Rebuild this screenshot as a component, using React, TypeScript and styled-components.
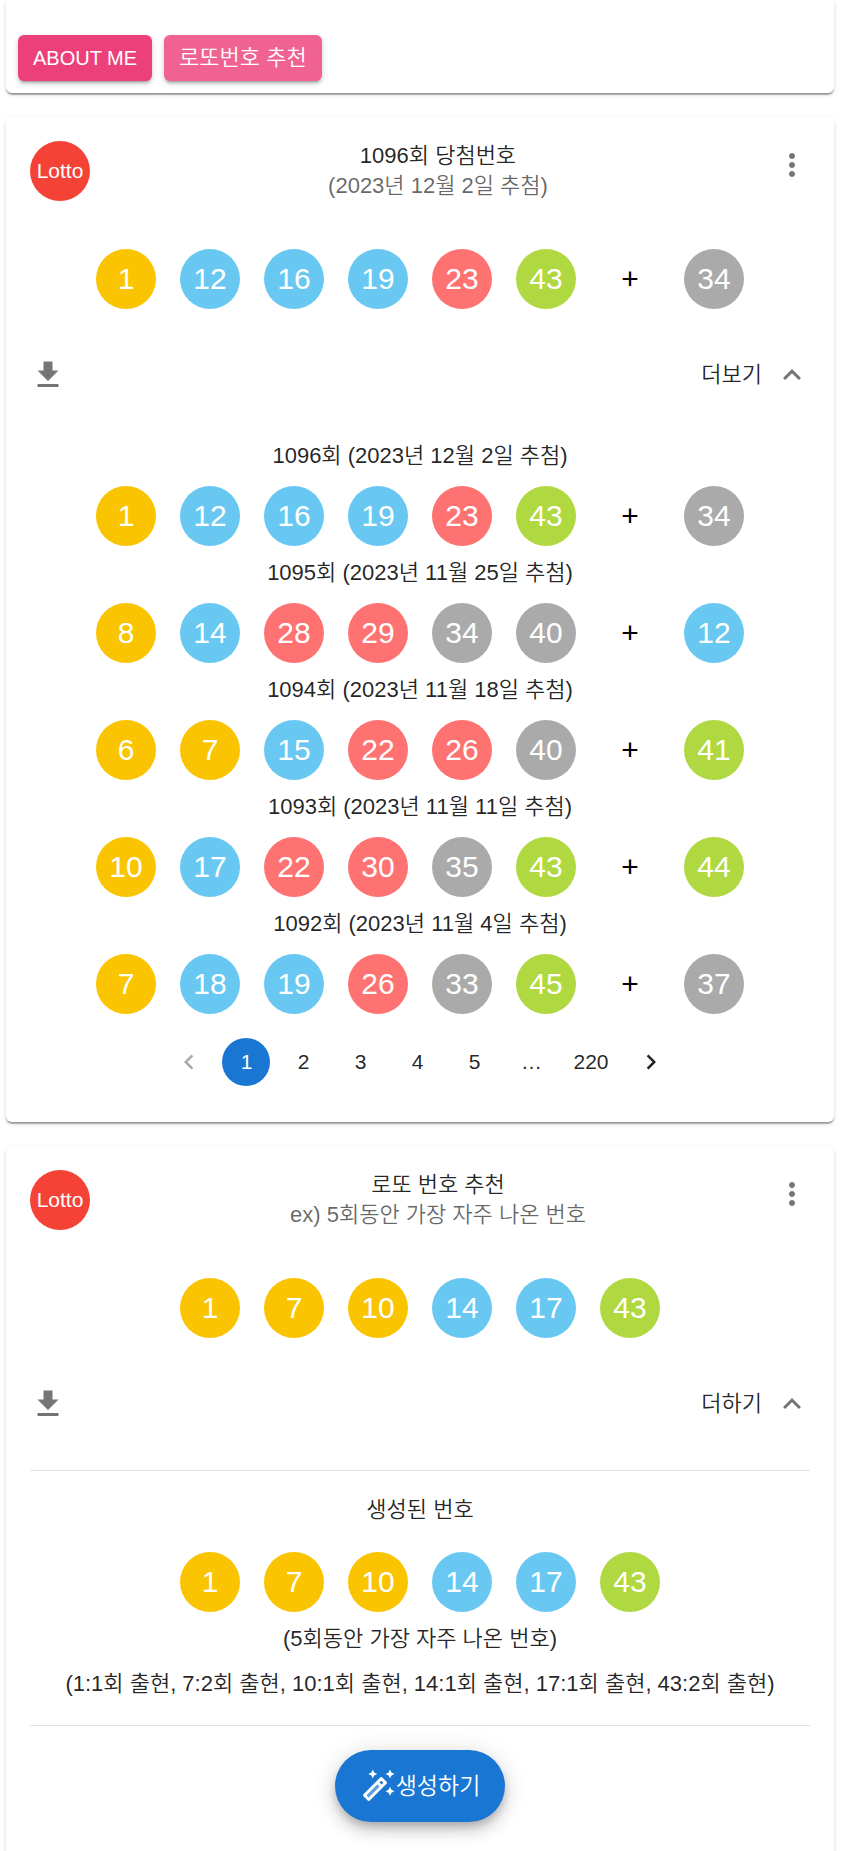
import React from "react";
import styled, { createGlobalStyle } from "styled-components";
import { MdMoreVert, MdExpandLess, MdChevronLeft, MdChevronRight } from "react-icons/md";

const GlobalStyle = createGlobalStyle`
  *, *::before, *::after { box-sizing: border-box; }
  body {
    margin: 0;
    background: #fff;
    color: rgba(0, 0, 0, 0.87);
    font: 350 22px/30px "Liberation Sans", "Noto Sans CJK KR", sans-serif;
  }
  button { font: inherit; color: inherit; border: 0; padding: 0; background: none; cursor: pointer; }
  h2, p, ul { margin: 0; padding: 0; font: inherit; list-style: none; }
`;

const Page = styled.main`
  display: flex;
  flex-direction: column;
  gap: 24px;
  padding: 0 18px 0 6px;
  overflow: hidden;
`;

const Card = styled.section`
  background: #fff;
  border-radius: 6px;
  box-shadow: 0 3px 2px -2px rgba(0, 0, 0, 0.25), 0 2px 1px rgba(0, 0, 0, 0.2), 0 2px 5px rgba(0, 0, 0, 0.12);
`;

const NavCard = styled(Card)`
  display: flex;
  gap: 12px;
  padding: 35px 12px 12px;
  border-radius: 0 0 6px 6px;
`;

const NavButton = styled.button<{ $tone: string; $latin?: boolean }>`
  height: 46px;
  padding: 0 15px;
  border-radius: 6px;
  background: ${(p) => p.$tone};
  color: #fff;
  font-size: ${(p) => (p.$latin ? "20px" : "22px")};
  box-shadow: 0 4px 2px -3px rgba(0, 0, 0, 0.2), 0 3px 3px rgba(0, 0, 0, 0.14), 0 2px 7px rgba(0, 0, 0, 0.12);
`;

const Header = styled.header`
  display: flex;
  align-items: flex-start;
  padding: 24px 12px 24px 24px;
`;

const Avatar = styled.div`
  flex: none;
  display: grid;
  place-items: center;
  width: 60px;
  height: 60px;
  margin-right: 24px;
  border-radius: 50%;
  background: #f44336;
  color: #fff;
  font-size: 21px;
`;

const Heading = styled.div`
  flex: 1;
  text-align: center;
`;

const Subtitle = styled.p`
  color: rgba(0, 0, 0, 0.6);
`;

const IconButton = styled.button`
  flex: none;
  display: grid;
  place-items: center;
  width: 60px;
  height: 60px;
  color: rgba(0, 0, 0, 0.54);
  svg { width: 36px; height: 36px; }
`;

const MenuButton = styled(IconButton)`
  margin: -6px 0;
`;

const Balls = styled.div`
  display: flex;
  justify-content: center;
  gap: 24px;
`;

const BallCircle = styled.span<{ $color: string }>`
  display: grid;
  place-items: center;
  width: 60px;
  height: 60px;
  border-radius: 50%;
  background: ${(p) => p.$color};
  color: #fff;
  font-size: 30px;
`;

const Plus = styled.span`
  display: grid;
  place-items: center;
  width: 60px;
  height: 60px;
  color: #000;
  font-size: 30px;
`;

const Content = styled.div`
  padding: 24px;
`;

const Actions = styled.div`
  display: flex;
  align-items: center;
  padding: 12px;
`;

const ActionLabel = styled.span`
  margin-left: auto;
`;

const History = styled.div`
  display: flex;
  flex-direction: column;
  gap: 12px;
  padding: 24px 24px 36px;
`;

const Round = styled.div`
  display: flex;
  flex-direction: column;
  gap: 15px;
  text-align: center;
`;

const Pages = styled.ul`
  display: flex;
  justify-content: center;
  gap: 9px;
  padding-top: 12px;
  font-size: 21px;
`;

const PageButton = styled.button<{ $active?: boolean }>`
  display: grid;
  place-items: center;
  min-width: 48px;
  height: 48px;
  padding: 0 9px;
  border-radius: 24px;
  background: ${(p) => (p.$active ? "#1976d2" : "transparent")};
  color: ${(p) => (p.$active ? "#fff" : "inherit")};
  &:disabled { opacity: 0.38; cursor: default; }
  svg { width: 30px; height: 30px; }
`;

const Ellipsis = styled.span`
  display: block;
  width: 48px;
  line-height: 48px;
  text-align: center;
`;

const Result = styled.div`
  margin: 24px 24px 0;
  padding: 24px 0 26px;
  border: solid rgba(0, 0, 0, 0.12);
  border-width: 1px 0;
  text-align: center;
`;

const ResultBalls = styled(Balls)`
  padding: 27px 0 12px;
`;

const ResultNote = styled.p`
  & + & { margin-top: 15px; }
`;

const Footer = styled.div`
  display: flex;
  justify-content: center;
  padding: 24px 24px 48px;
`;

const Generate = styled.button`
  display: flex;
  align-items: center;
  height: 72px;
  padding: 0 25px;
  border-radius: 36px;
  background: #1976d2;
  color: #fff;
  font-size: 23px;
  box-shadow: 0 5px 8px -2px rgba(0, 0, 0, 0.2), 0 9px 15px rgba(0, 0, 0, 0.14), 0 2px 27px rgba(0, 0, 0, 0.12);
  svg { width: 36px; height: 36px; }
`;

const ballColor = (n: number) =>
  n <= 10 ? "#fbc400" : n <= 20 ? "#69c8f2" : n <= 30 ? "#ff7272" : n <= 40 ? "#aaa" : "#b0d840";

const Ball = ({ n }: { n: number }) => <BallCircle $color={ballColor(n)}>{n}</BallCircle>;

const Draw = ({ numbers, bonus }: { numbers: number[]; bonus?: number }) => (
  <Balls>
    {numbers.map((n) => <Ball key={n} n={n} />)}
    {bonus !== undefined && (
      <>
        <Plus>+</Plus>
        <Ball n={bonus} />
      </>
    )}
  </Balls>
);

const rounds = [
  { title: "1096회 (2023년 12월 2일 추첨)", numbers: [1, 12, 16, 19, 23, 43], bonus: 34 },
  { title: "1095회 (2023년 11월 25일 추첨)", numbers: [8, 14, 28, 29, 34, 40], bonus: 12 },
  { title: "1094회 (2023년 11월 18일 추첨)", numbers: [6, 7, 15, 22, 26, 40], bonus: 41 },
  { title: "1093회 (2023년 11월 11일 추첨)", numbers: [10, 17, 22, 30, 35, 43], bonus: 44 },
  { title: "1092회 (2023년 11월 4일 추첨)", numbers: [7, 18, 19, 26, 33, 45], bonus: 37 },
];

const picks = [1, 7, 10, 14, 17, 43];

const LottoHeader = ({ title, subtitle }: { title: string; subtitle: string }) => (
  <Header>
    <Avatar>Lotto</Avatar>
    <Heading>
      <h2>{title}</h2>
      <Subtitle>{subtitle}</Subtitle>
    </Heading>
    <MenuButton aria-label="메뉴"><MdMoreVert /></MenuButton>
  </Header>
);

const DownloadIcon = () => (
  <svg viewBox="0 0 24 24" fill="currentColor" aria-hidden="true">
    <path d="M19 9h-4V3H9v6H5l7 7 7-7zM5 18v2h14v-2H5z" />
  </svg>
);

const LottoActions = ({ label }: { label: string }) => (
  <Actions>
    <IconButton aria-label="다운로드"><DownloadIcon /></IconButton>
    <ActionLabel>{label}</ActionLabel>
    <IconButton aria-label={label}><MdExpandLess /></IconButton>
  </Actions>
);

const Wand = () => (
  <svg viewBox="0 0 24 24" fill="currentColor" aria-hidden="true">
    <path d="M20 7l.94-2.06L23 4l-2.06-.94L20 1l-.94 2.06L17 4l2.06.94zM8.5 7l.94-2.06L11.5 4l-2.06-.94L8.5 1l-.94 2.06L5.5 4l2.06.94zM20 12.5l-.94 2.06-2.06.94 2.06.94.94 2.06.94-2.06L23 15.5l-2.06-.94zM17.71 9.12l-2.83-2.83c-.2-.19-.45-.29-.71-.29-.26 0-.51.1-.71.29L2.29 17.46c-.39.39-.39 1.02 0 1.41l2.83 2.83c.2.2.45.3.71.3s.51-.1.71-.29l11.17-11.17c.39-.39.39-1.03 0-1.42zm-3.54-.7 1.41 1.41L14.41 11 13 9.59l1.17-1.17zM5.83 19.59l-1.41-1.41L11.59 11 13 12.41l-7.17 7.18z" />
    <path opacity=".3" d="M4.42 18.17L11.59 11 13 12.41 5.83 19.59z" />
  </svg>
);

export default function App() {
  return (
    <>
      <GlobalStyle />
      <Page>
        <NavCard as="nav">
          <NavButton $tone="#ec407a" $latin>ABOUT ME</NavButton>
          <NavButton $tone="#f06292">로또번호 추천</NavButton>
        </NavCard>
        <Card>
          <LottoHeader title="1096회 당첨번호" subtitle="(2023년 12월 2일 추첨)" />
          <Content><Draw numbers={rounds[0].numbers} bonus={rounds[0].bonus} /></Content>
          <LottoActions label="더보기" />
          <History>
            {rounds.map((r) => (
              <Round key={r.title}>
                <p>{r.title}</p>
                <Draw numbers={r.numbers} bonus={r.bonus} />
              </Round>
            ))}
            <Pages>
              <li><PageButton disabled aria-label="이전 페이지"><MdChevronLeft /></PageButton></li>
              {[1, 2, 3, 4, 5].map((n) => (
                <li key={n}><PageButton $active={n === 1}>{n}</PageButton></li>
              ))}
              <li><Ellipsis>…</Ellipsis></li>
              <li><PageButton>220</PageButton></li>
              <li><PageButton aria-label="다음 페이지"><MdChevronRight /></PageButton></li>
            </Pages>
          </History>
        </Card>
        <Card>
          <LottoHeader title="로또 번호 추천" subtitle="ex) 5회동안 가장 자주 나온 번호" />
          <Content><Draw numbers={picks} /></Content>
          <LottoActions label="더하기" />
          <Result>
            <p>생성된 번호</p>
            <ResultBalls>{picks.map((n) => <Ball key={n} n={n} />)}</ResultBalls>
            <ResultNote>(5회동안 가장 자주 나온 번호)</ResultNote>
            <ResultNote>(1:1회 출현, 7:2회 출현, 10:1회 출현, 14:1회 출현, 17:1회 출현, 43:2회 출현)</ResultNote>
          </Result>
          <Footer>
            <Generate><Wand />생성하기</Generate>
          </Footer>
        </Card>
      </Page>
    </>
  );
}
